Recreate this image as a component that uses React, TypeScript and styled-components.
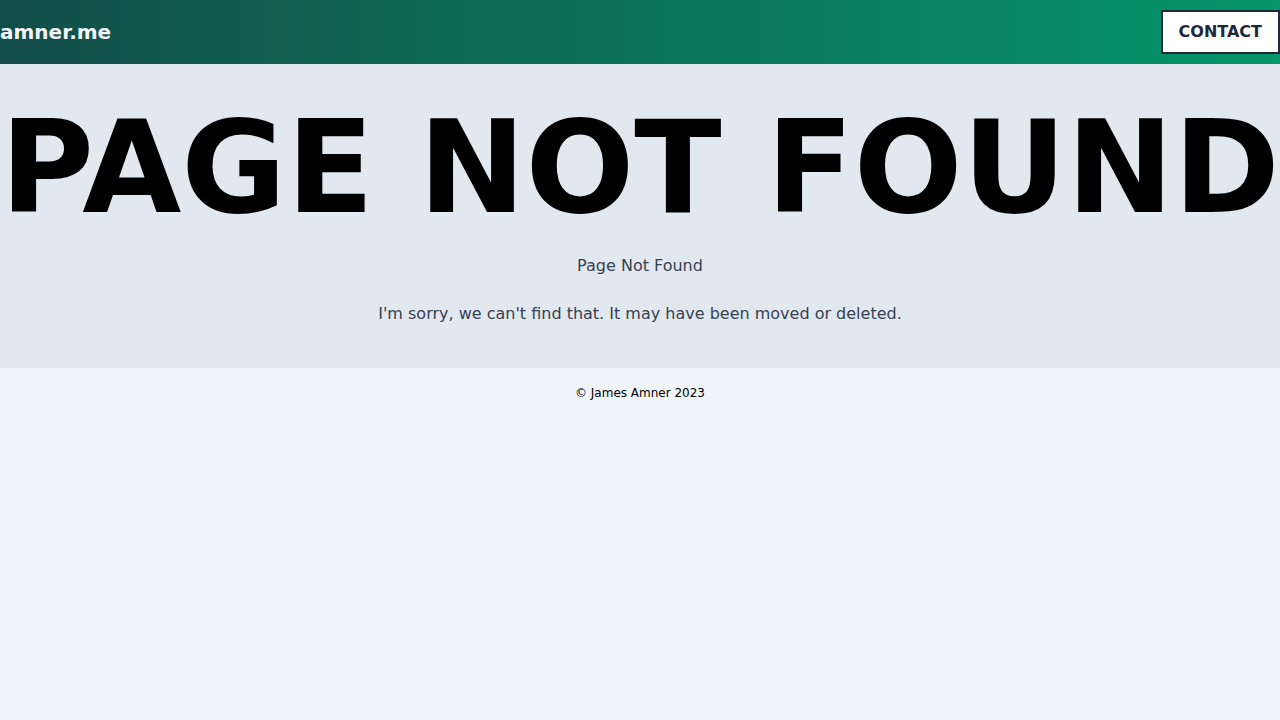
import React from "react";
import styled, { createGlobalStyle } from "styled-components";

const GlobalStyle = createGlobalStyle`
  *, *::before, *::after { box-sizing: border-box; }
  body {
    margin: 0;
    background: #f1f5f9;
    color: #000;
    font-family: "DejaVu Sans", sans-serif;
    font-size: 16px;
    line-height: 24px;
  }
`;

const Header = styled.header`
  display: flex;
  align-items: center;
  justify-content: space-between;
  height: 64px;
  background: linear-gradient(to right, #134e4a, #059669);
`;

const Brand = styled.a`
  color: #f1f5f9;
  font-size: 20px;
  font-weight: 700;
  line-height: 28px;
  text-decoration: none;
`;

const ContactLink = styled.a`
  padding: 8px 16px;
  border: 2px solid #1e293b;
  background: #fff;
  color: #1e293b;
  font-weight: 700;
  text-decoration: none;
  text-transform: uppercase;
`;

const Main = styled.main`
  display: flex;
  flex-direction: column;
  align-items: center;
  gap: 20px;
  padding: 40px 0;
  background: #e2e8f0;
  text-align: center;
`;

const Title = styled.h1`
  margin: 0;
  font-size: 128px;
  font-weight: 700;
  line-height: 128px;
  text-transform: uppercase;
`;

const Message = styled.p`
  margin: 0;
  color: #374151;
  line-height: 28px;
`;

const Footer = styled.footer`
  padding: 16px 0;
  font-size: 12px;
  line-height: 18px;
  text-align: center;
`;

export default function App() {
  return (
    <>
      <GlobalStyle />
      <Header>
        <Brand href="/">amner.me</Brand>
        <ContactLink href="/contact">Contact</ContactLink>
      </Header>
      <Main>
        <Title>Page Not Found</Title>
        <Message>Page Not Found</Message>
        <Message>I'm sorry, we can't find that. It may have been moved or deleted.</Message>
      </Main>
      <Footer>© James Amner 2023</Footer>
    </>
  );
}
